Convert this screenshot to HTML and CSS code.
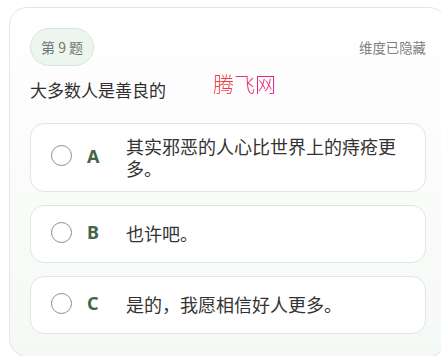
FILE: index.html
```html
<!DOCTYPE html>
<html lang="zh">
<head>
<meta charset="utf-8">
<link rel="stylesheet" href="styles.css">
</head>
<body>
<div class="card">
  <div class="head">
    <span class="badge">第 9 题</span>
    <span class="hidden-note">维度已隐藏</span>
  </div>
  <div class="question">大多数人是善良的</div>
  <div class="options">
    <div class="option">
      <span class="radio"></span>
      <span class="letter">A</span>
      <span class="text">其实邪恶的人心比世界上的痔疮更多。</span>
    </div>
    <div class="option">
      <span class="radio"></span>
      <span class="letter">B</span>
      <span class="text">也许吧。</span>
    </div>
    <div class="option">
      <span class="radio"></span>
      <span class="letter">C</span>
      <span class="text">是的，我愿相信好人更多。</span>
    </div>
  </div>
  <div class="watermark">腾飞网</div>
</div>
</body>
</html>
```
FILE: styles.css
```css
html, body {
  margin: 0;
  padding: 0;
  background: #ffffff;
  overflow: hidden;
}
body {
  width: 441px;
  height: 356px;
  font-family: "Noto Sans CJK SC", "Noto Sans", sans-serif;
  color: #333333;
}
.card {
  position: relative;
  box-sizing: border-box;
  width: 438px;
  margin: 7px 0 0 9px;
  padding: 20px 20px 22px 20px;
  border: 1px solid #dfe8e2;
  border-radius: 18px;
  background: linear-gradient(180deg, #ffffff 0%, #fbfcfb 40%, #f5f9f5 100%);
}
.head {
  display: flex;
  align-items: center;
  justify-content: space-between;
}
.badge {
  box-sizing: border-box;
  height: 38px;
  padding: 0 10px;
  display: flex;
  align-items: center;
  border: 1px solid #d6e7da;
  border-radius: 19px;
  background: #edf5ef;
  color: #6f7a73;
  font-size: 14px;
  line-height: 20px;
}
.hidden-note {
  color: #7d807e;
  font-size: 13.4px;
  line-height: 20px;
}
.question {
  margin: 12px 0 21px 0;
  font-size: 17px;
  line-height: 24px;
  color: #2f2f2f;
}
.options {
  display: flex;
  flex-direction: column;
  gap: 13px;
}
.option {
  display: flex;
  align-items: center;
  min-height: 32px;
  padding: 12px 20px;
  border: 1px solid #dce9df;
  border-radius: 14px;
  background: #ffffff;
}
.radio {
  flex: none;
  box-sizing: border-box;
  width: 21px;
  height: 21px;
  border: 1.5px solid #8c8c8c;
  border-radius: 50%;
  margin-right: 15px;
  margin-top: -4px;
}
.letter {
  flex: none;
  width: 24px;
  margin-right: 15px;
  margin-top: -4px;
  font-family: "Noto Sans", "Open Sans", sans-serif;
  font-weight: 700;
  font-size: 18px;
  line-height: 32px;
  color: #44654a;
}
.text {
  flex: 1;
  font-size: 18px;
  line-height: 21.5px;
  color: #333333;
}
.watermark {
  position: absolute;
  left: 203px;
  top: 64px;
  font-size: 21px;
  line-height: 22px;
  font-weight: 300;
  background: linear-gradient(90deg, #f2423a 0%, #ec2f6a 60%, #e0208c 100%);
  -webkit-background-clip: text;
  background-clip: text;
  color: transparent;
}
```
